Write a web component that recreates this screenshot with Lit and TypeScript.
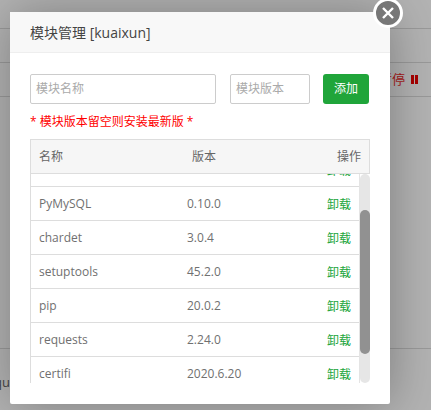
import { LitElement, html, css } from "lit";
import { customElement } from "lit/decorators.js";

const rows: [string, string][] = [
  ["wheel", "0.34.2"],
  ["urllib3", "1.25.10"],
  ["PyMySQL", "0.10.0"],
  ["chardet", "3.0.4"],
  ["setuptools", "45.2.0"],
  ["pip", "20.0.2"],
  ["requests", "2.24.0"],
  ["certifi", "2020.6.20"],
  ["idna", "2.10"],
];

@customElement("app-root")
export class AppRoot extends LitElement {
  static styles = css`
    :host {
      display: block;
      width: 431px;
      height: 410px;
      overflow: hidden;
      position: relative;
      font-family: "Open Sans", "Noto Sans CJK SC", sans-serif;
      color: #555;
    }
    .page {
      position: absolute;
      inset: 0;
      background: #b3b3b3;
    }
    .line {
      height: 1px;
      background: #9a9a9a;
    }
    .lines {
      display: flex;
      flex-direction: column;
      padding-top: 28px;
      gap: 33px;
    }
    .pause {
      position: absolute;
      left: 379px;
      top: 71px;
      font-size: 13px;
      color: #a81a1a;
      display: flex;
      align-items: center;
      gap: 6px;
      line-height: 16px;
    }
    .bars { display: flex; gap: 1px; }
    .bars i { display: block; width: 3px; height: 9px; background: #a80000; }
    .low {
      position: absolute;
      left: 0;
      top: 348px;
      width: 100%;
      height: 1px;
      background: #9a9a9a;
    }
    .qu {
      position: absolute;
      left: -6px;
      top: 374px;
      font-size: 13px;
      color: #444;
      line-height: 16px;
    }
    .modal {
      position: absolute;
      left: 10px;
      top: 12px;
      width: 380px;
      height: 392px;
      background: #fff;
      border-radius: 2px;
      box-shadow: 1px 1px 50px rgba(0, 0, 0, 0.3);
      display: flex;
      flex-direction: column;
    }
    .head {
      height: 41px;
      flex: none;
      box-sizing: border-box;
      padding-left: 20px;
      background: #f8f8f8;
      border-bottom: 1px solid #eee;
      font-size: 14px;
      line-height: 41px;
      color: #444;
    }
    .close {
      position: absolute;
      left: 363px;
      top: -14px;
      width: 30px;
      height: 30px;
    }
    .body {
      padding: 21px 20px 0;
      display: flex;
      flex-direction: column;
    }
    .form { display: flex; align-items: center; }
    .input {
      box-sizing: border-box;
      height: 30px;
      border: 1px solid #ccc;
      border-radius: 2px;
      padding-left: 5px;
      font-size: 12px;
      line-height: 28px;
      color: #aaa;
      background: #fff;
    }
    .name { width: 186px; margin-right: 14px; }
    .ver { width: 80px; margin-right: 13px; }
    .add {
      width: 46px;
      height: 30px;
      background: #20a53a;
      color: #fff;
      font-size: 12px;
      line-height: 30px;
      text-align: center;
      border-radius: 3px;
    }
    .tip {
      margin-top: 9px;
      font-size: 12px;
      line-height: 18px;
      color: #f00;
    }
    .table {
      margin-top: 8px;
      width: 340px;
      font-size: 12px;
    }
    .thead {
      box-sizing: border-box;
      height: 35px;
      display: grid;
      grid-template-columns: 153px 1fr auto;
      align-items: center;
      padding: 0 8px;
      background: #f6f6f6;
      border: 1px solid #ddd;
      color: #666;
      line-height: 33px;
    }
    .tbody {
      display: flex;
      height: 209px;
    }
    .scroll {
      flex: 1;
      min-width: 0;
      overflow: hidden;
      border-left: 1px solid #ddd;
      border-right: 1px solid #e4e4e4;
    }
    .track {
      flex: none;
      width: 10px;
      height: 100%;
      border-radius: 5px;
      background: #e6e6e6;
      display: flex;
      flex-direction: column;
      padding-top: 36px;
      box-sizing: border-box;
    }
    .thumb {
      height: 144px;
      border-radius: 5px;
      background: #919191;
    }
    .row {
      box-sizing: border-box;
      height: 34px;
      display: grid;
      grid-template-columns: 148px 1fr auto;
      align-items: center;
      padding: 0 8px;
      border-bottom: 1px solid #ddd;
      color: #707070;
    }
    .act { color: #20a53a; }
  `;

  firstUpdated() {
    const s = this.renderRoot.querySelector(".scroll") as HTMLElement;
    s.scrollTop = 55;
  }

  render() {
    return html`
      <div class="page">
        <div class="lines">
          <div class="line"></div>
          <div class="line"></div>
          <div class="line"></div>
        </div>
        <div class="low"></div>
        <div class="pause"><span>暂停</span><span class="bars"><i></i><i></i></span></div>
        <div class="qu">qu</div>
      </div>
      <div class="modal">
        <div class="head">模块管理 [kuaixun]</div>
        <svg class="close" viewBox="0 0 30 30">
          <circle cx="15" cy="15" r="13.5" fill="#777" stroke="#fff" stroke-width="3"></circle>
          <path d="M10 10L20 20M20 10L10 20" stroke="#fff" stroke-width="2.4" fill="none"></path>
        </svg>
        <div class="body">
          <div class="form">
            <div class="input name">模块名称</div>
            <div class="input ver">模块版本</div>
            <div class="add">添加</div>
          </div>
          <div class="tip">* 模块版本留空则安装最新版 *</div>
          <div class="table">
            <div class="thead"><span>名称</span><span>版本</span><span>操作</span></div>
            <div class="tbody">
              <div class="scroll">
                ${rows.map(
                  ([n, v]) => html`<div class="row"><span>${n}</span><span>${v}</span><span class="act">卸载</span></div>`
                )}
              </div>
              <div class="track"><div class="thumb"></div></div>
            </div>
          </div>
        </div>
      </div>
    `;
  }
}
